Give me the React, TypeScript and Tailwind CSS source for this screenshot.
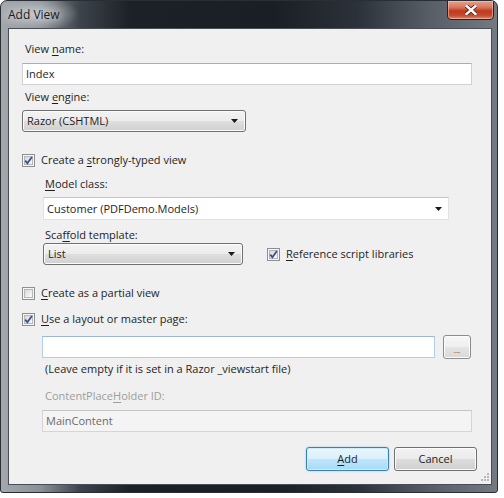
import React from "react";

function U({ children }: { children: React.ReactNode }) {
  return <span className="underline underline-offset-[2px] decoration-[1px]">{children}</span>;
}

function Check({ checked }: { checked: boolean }) {
  return (
    <span className="w-[13px] h-[13px] border border-[#8e8f8f] bg-[#f6f6f6] p-[1px] flex shrink-0">
      <span className="flex-1 border border-[#b4b8bd] bg-[linear-gradient(135deg,#d8d8d8,#fbfbfb)] relative">
        {checked && (
          <svg className="absolute left-[-2px] top-[-2px]" width="11" height="11" viewBox="0 0 11 11">
            <path d="M2.2 5.6 L4.4 8.2 L8.9 1.9" stroke="#3a4f95" strokeWidth="1.8" fill="none" strokeLinejoin="miter" />
          </svg>
        )}
      </span>
    </span>
  );
}

function Arrow() {
  return (
    <svg width="7" height="4" viewBox="0 0 7 4" className="shrink-0">
      <path d="M0 0 H7 L3.5 4 Z" fill="#1a1a1a" />
    </svg>
  );
}

function Select({ cls, text }: { cls: string; text: string }) {
  return (
    <div
      className={`h-[22px] rounded-[3px] border border-[#707070] bg-[linear-gradient(#f3f3f3_0%,#ececec_48%,#dedede_52%,#d0d0d0_100%)] shadow-[inset_0_0_0_1px_#fbfbfb] flex items-center pl-[4px] pr-[7px] justify-between ${cls}`}
    >
      <span className="text-[#1e1e1e]">{text}</span>
      <Arrow />
    </div>
  );
}

export default function App() {
  return (
    <div className="w-[504px] h-[498px] bg-white font-['Open_Sans',sans-serif] text-[11px] leading-[16px] text-[#1e1e1e]">
      <div className="w-[498px] h-[493px] rounded-t-[7px] rounded-b-[3px] border border-[#2a2f35] bg-[linear-gradient(90deg,#a3a8ad_0%,#8a9096_8%,#3d434a_16%,#1c2127_26%,#1a1f25_55%,#2c3239_72%,#565d64_86%,#737a81_100%)] flex flex-col relative overflow-hidden">
        {/* title */}
        <div className="h-[27px] flex items-center pl-[7px] shrink-0 relative">
          <div className="absolute left-[-6px] top-[-4px] w-[84px] h-[34px] rounded-full bg-[radial-gradient(closest-side,rgba(200,204,208,0.85),rgba(160,166,172,0))]" />
          <span className="relative text-[12px] text-[#1b1b1b] [text-shadow:0_0_6px_#dfe2e5]">Add View</span>
          <div className="absolute right-[3px] top-[-1px] w-[47px] h-[20px] rounded-b-[4px] border border-[#3e1a14] bg-[linear-gradient(#e5a08e_0%,#d7775e_35%,#c0391c_55%,#c44a2c_80%,#dd8a6c_100%)] shadow-[inset_0_0_0_1px_rgba(255,210,195,0.5)] flex items-center justify-center">
            <svg width="12" height="10" viewBox="0 0 12 10">
              <path d="M1.5 1 L10.5 9 M10.5 1 L1.5 9" stroke="#4a1a10" strokeWidth="4" strokeLinecap="round" />
              <path d="M1.5 1 L10.5 9 M10.5 1 L1.5 9" stroke="#ffffff" strokeWidth="2.4" strokeLinecap="square" />
            </svg>
          </div>
        </div>

        {/* client */}
        <div className="ml-[7px] mr-[5px] h-[457px] border border-[#484e55] bg-[#f0f0f0] flex flex-col pl-[13px] relative shrink-0">
          <div className="mt-[12px] pl-[3px]">View <U>n</U>ame:</div>
          <div className="mt-[6px] w-[450px] h-[22px] bg-white border border-[#cfd3d8] border-t-[#abadb3] flex items-center pl-[3px]">Index</div>

          <div className="mt-[4px] pl-[3px]">View <U>e</U>ngine:</div>
          <Select cls="mt-[5px] w-[224px]" text="Razor (CSHTML)" />

          <div className="mt-[20px] flex items-center gap-[6px] h-[16px]">
            <Check checked />
            <span>Create a <U>s</U>trongly-typed view</span>
          </div>

          <div className="pl-[21px] flex flex-col">
            <div className="mt-[8px] pl-[2px]"><U>M</U>odel class:</div>
            <div className="mt-[5px] w-[406px] h-[23px] bg-white border border-[#dfe3e8] border-t-[#c3c6cb] flex items-center justify-between pl-[3px] pr-[6px]">
              <span>Customer (PDFDemo.Models)</span>
              <Arrow />
            </div>
            <div className="mt-[7px] pl-[2px]">Sca<U>f</U>fold template:</div>
            <div className="flex items-center">
              <Select cls="w-[200px]" text="List" />
              <div className="ml-[24px] flex items-center gap-[6px]">
                <Check checked />
                <span><U>R</U>eference script libraries</span>
              </div>
            </div>
          </div>

          <div className="mt-[20px] flex items-center gap-[6px] h-[16px]">
            <Check checked={false} />
            <span><U>C</U>reate as a partial view</span>
          </div>
          <div className="mt-[10px] flex items-center gap-[6px] h-[16px]">
            <Check checked />
            <span><U>U</U>se a layout or master page:</span>
          </div>

          <div className="pl-[20px] flex flex-col">
            <div className="mt-[8px] flex items-center h-[24px]">
              <div className="w-[393px] h-[22px] bg-white border border-[#b6cde6] border-t-[#9bb8d9]" />
              <div className="ml-[8px] w-[28px] h-[24px] rounded-[3px] border border-[#8c8c8c] bg-[linear-gradient(#f6f6f6_0%,#efefef_48%,#e4e4e4_52%,#d9d9d9_100%)] shadow-[inset_0_0_0_1px_#fcfcfc] flex items-end justify-center pb-[4px] text-[8px] leading-[8px] text-[#333]">
                ...
              </div>
            </div>
            <div className="mt-[2px] pl-[3px]">(Leave empty if it is set in a Razor _viewstart file)</div>
            <div className="mt-[11px] pl-[3px] text-[#9d9d9d]">ContentPlace<U>H</U>older ID:</div>
            <div className="mt-[6px] w-[430px] h-[22px] bg-[#f4f4f4] border border-[#d2d5d9] border-t-[#c2c5ca] flex items-center pl-[3px] text-[#6a6a6a]">
              MainContent
            </div>
          </div>

          <div className="mt-[15px] flex justify-end pr-[14px] gap-[5px]">
            <div className="w-[83px] h-[24px] rounded-[3px] border border-[#3c7fb1] bg-[linear-gradient(#eaf6fd_0%,#d9f0fc_48%,#bee6fd_52%,#a7d9f5_100%)] shadow-[inset_0_0_0_1px_#cfeaf9,0_0_2px_#8cc7ea] flex items-center justify-center">
              <span><U>A</U>dd</span>
            </div>
            <div className="w-[83px] h-[24px] rounded-[3px] border border-[#707070] bg-[linear-gradient(#f2f2f2_0%,#ebebeb_48%,#dddddd_52%,#cfcfcf_100%)] shadow-[inset_0_0_0_1px_#fcfcfc] flex items-center justify-center">
              Cancel
            </div>
          </div>

          <svg className="absolute right-[2px] bottom-[2px]" width="10" height="10" viewBox="0 0 10 10">
            {[[8, 0], [8, 3], [5, 3], [8, 6], [5, 6], [2, 6]].map(([x, y], i) => (
              <rect key={i} x={x} y={y + 1} width="2" height="2" fill="#b9b9b9" />
            ))}
          </svg>
        </div>
      </div>
    </div>
  );
}
